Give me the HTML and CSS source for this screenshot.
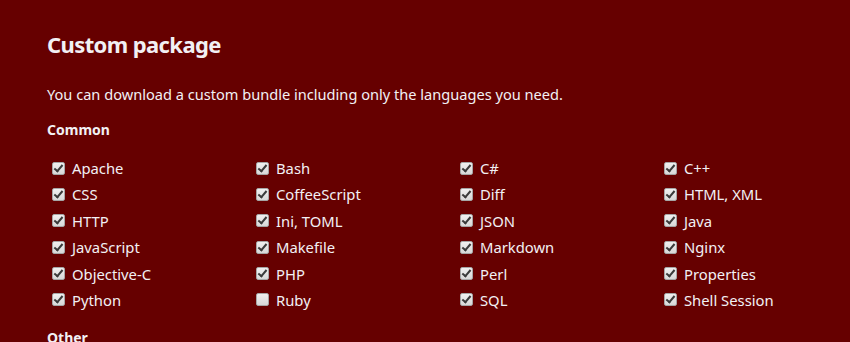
FILE: index.html
```html
<!DOCTYPE html>
<html>
<head>
<meta charset="utf-8">
<link rel="stylesheet" href="styles.css">
</head>
<body>
<section class="package">
  <h2 class="title">Custom package</h2>
  <p class="lead">You can download a custom bundle including only the languages you need.</p>
  <h4 class="group">Common</h4>
  <ul class="langs">
    <li><label><input type="checkbox" checked> Apache</label></li>
    <li><label><input type="checkbox" checked> Bash</label></li>
    <li><label><input type="checkbox" checked> C#</label></li>
    <li><label><input type="checkbox" checked> C++</label></li>
    <li><label><input type="checkbox" checked> CSS</label></li>
    <li><label><input type="checkbox" checked> CoffeeScript</label></li>
    <li><label><input type="checkbox" checked> Diff</label></li>
    <li><label><input type="checkbox" checked> HTML, XML</label></li>
    <li><label><input type="checkbox" checked> HTTP</label></li>
    <li><label><input type="checkbox" checked> Ini, TOML</label></li>
    <li><label><input type="checkbox" checked> JSON</label></li>
    <li><label><input type="checkbox" checked> Java</label></li>
    <li><label><input type="checkbox" checked> JavaScript</label></li>
    <li><label><input type="checkbox" checked> Makefile</label></li>
    <li><label><input type="checkbox" checked> Markdown</label></li>
    <li><label><input type="checkbox" checked> Nginx</label></li>
    <li><label><input type="checkbox" checked> Objective-C</label></li>
    <li><label><input type="checkbox" checked> PHP</label></li>
    <li><label><input type="checkbox" checked> Perl</label></li>
    <li><label><input type="checkbox" checked> Properties</label></li>
    <li><label><input type="checkbox" checked> Python</label></li>
    <li><label><input type="checkbox"> Ruby</label></li>
    <li><label><input type="checkbox" checked> SQL</label></li>
    <li><label><input type="checkbox" checked> Shell Session</label></li>
  </ul>
  <h4 class="group">Other</h4>
</section>
</body>
</html>
```
FILE: styles.css
```css
html, body {
  margin: 0;
  padding: 0;
  background: #660000;
  overflow: hidden;
}
body {
  color: #f2f0f4;
  font-family: "Noto Sans", sans-serif;
  width: 850px;
  height: 342px;
}
.package {
  padding: 26px 0 0 47px;
}
.title {
  margin: 0;
  font-size: 22px;
  letter-spacing: -0.6px;
  line-height: 36px;
  font-weight: bold;
}
.lead {
  margin: 20px 0 0;
  font-size: 14.6px;
  line-height: 24px;
}
.group {
  margin: 14px 0 0;
  font-size: 14px;
  line-height: 20px;
  font-weight: bold;
}
.langs {
  list-style: none;
  margin: 15px 0 0;
  padding: 0 0 0 2px;
  display: grid;
  grid-template-columns: repeat(4, 204px);
  width: 820px;
}
.langs li {
  height: 26.4px;
  font-size: 14.8px;
  line-height: 26px;
  white-space: nowrap;
}
.langs label {
  display: flex;
  align-items: center;
  gap: 4px;
}
.langs input {
  appearance: none;
  -webkit-appearance: none;
  margin: 0 3px 0 3px;
  width: 13px;
  height: 13px;
  box-sizing: border-box;
  border: 1px solid #a6a6a6;
  border-radius: 2px;
  background: linear-gradient(#f0f0f0, #d8d8d8);
  position: relative;
}
.langs input:checked::after {
  content: "";
  position: absolute;
  left: 3px;
  top: 0px;
  width: 3px;
  height: 7px;
  border: solid #3a3a3a;
  border-width: 0 2px 2px 0;
  transform: rotate(40deg);
}
.langs + .group {
  margin-top: 15px;
}
```
